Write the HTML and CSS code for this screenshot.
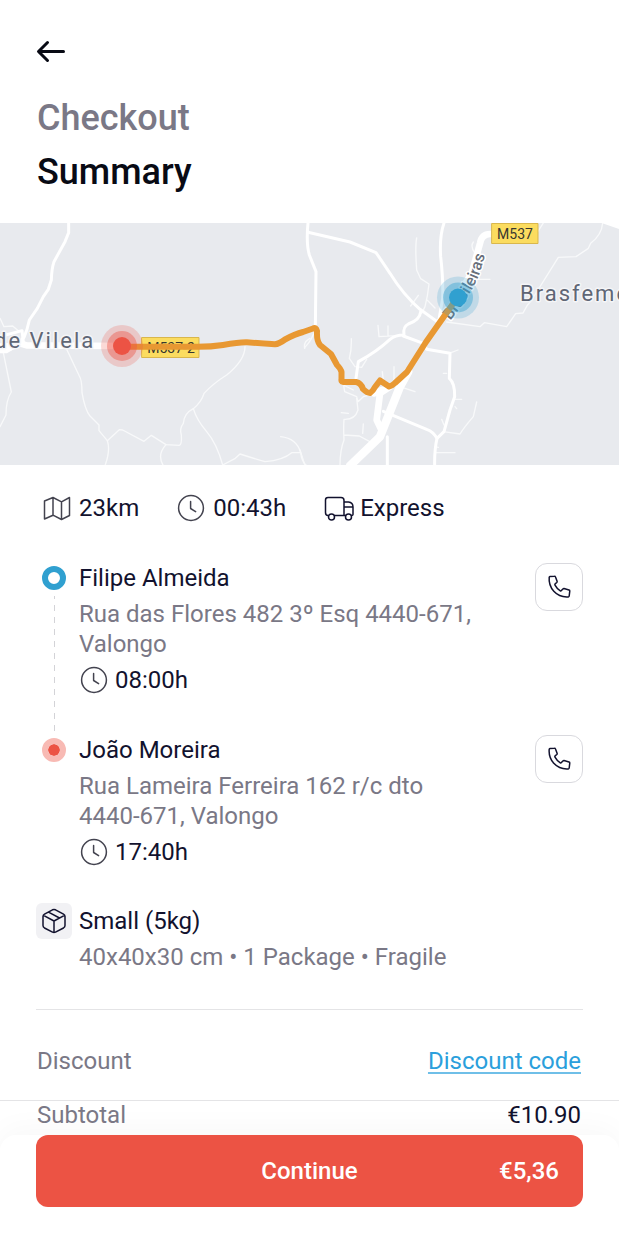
FILE: index.html
```html
<!DOCTYPE html>
<html lang="en">
<head>
<meta charset="utf-8">
<meta name="viewport" content="width=device-width, initial-scale=1">
<title>Checkout Summary</title>
<link rel="stylesheet" href="styles.css">
</head>
<body>
<svg class="sprite" aria-hidden="true">
  <symbol id="clock" viewBox="0 0 28 28">
    <circle cx="14" cy="14" r="12.4"/><path d="M13.6 7.5v7l5 3.2"/>
  </symbol>
  <symbol id="phone" viewBox="0 0 24 24">
    <path d="M2.2 2.3Q2.300 1.600 3 1.500L7.400 1.200Q8.200 1.100 8.400 1.800L10.100 6.300Q10.300 7 9.800 7.500L8.100 8.900Q7.600 9.500 8 10.200 9.800 13.700 13.300 15.800 13.900 16.200 14.400 15.600L15.900 14Q16.400 13.500 17 13.600L22 14.900Q22.800 15.100 22.800 15.900L22.200 21Q22.100 21.800 21.300 21.900 12.500 22.500 6.800 16.300 1.500 10.300 2.200 2.300Z"/>
  </symbol>
</svg>

<header class="header">
  <button class="back" type="button" aria-label="Back">
    <svg width="30" height="24" viewBox="0 0 30 24"><path d="M11.500 3.500 2.500 12.500l9 9M3 12.500h24.500"/></svg>
  </button>
  <h1 class="title"><span class="title-step">Checkout</span><span class="title-page">Summary</span></h1>
</header>

<main>
  <svg class="map" viewBox="0 0 619 242" role="img" aria-label="Route map">
    <g transform="translate(0 -3) scale(.33333)">
      <g class="lane">
        <path d="M200 388 238 468Q246 480 246 518 255 570 270 588L297 615V632L322 662Q332 690 315 737"/>
        <path d="M322 662 358 629 368 630 432 664 454 646 498 674 538 676Q546 674 544 645 538 625 550 610 552 580 580 566 605 545 612 520 640 490 680 465 735 420 735 380"/>
        <path d="M580 566Q590 600 620 635 650 670 668 735L706 715 720 702Q760 715 795 725 850 720 875 698H902Q890 655 842 650M902 698Q905 725 920 737M498 674Q470 705 490 737M10 398 34 516Q18 540 18 585L0 620M0 295 12 320 38 318 55 332M930 355Q910 365 914 385"/>
      </g>
      <path class="road" d="M206 9V38L195 65 162 125Q155 145 154 180L145 208 130 230 112 265 88 300Q82 330 72 352L50 374"/>
      <path class="road wide" d="M0 380 35 378 60 370 80 376 370 378"/>
      <path class="road" d="M0 350 66 332 70 365 20 395H0"/>
      <path class="road" d="M0 388H30L70 370M650 374 740 362 820 368"/>
    </g>
    <g transform="translate(300 -3) scale(.33333)">
      <g class="lane">
        <path d="M350 54Q345 80 350 150L362 176 387 192Q383 230 375 260L365 280M382 241 405 264M355 226 332 258M234 316 237 350 300 346M264 318V348M45 325Q40 355 14 383"/>
        <path d="M440 306 540 320 553 308 620 320 647 281 669 279Q680 255 695 240L775 112 828 110 865 85 872 70Q905 45 908 9M730 9 710 40M520 66Q510 80 525 100M530 178H570"/>
        <path d="M154 356Q155 390 148 415L165 440 185 442 200 418M247 455 252 500M270 490 345 515M282 440V480M124 492 160 510M130 490 134 515 170 530 174 545 190 530 230 520M170 535 174 570Q165 600 132 598 130 625 132 660 120 690 120 737M124 578 145 580M132 645 178 648 215 668M190 612 188 640M440 460H430M465 538H485M465 560 470 566M425 598 432 615M530 546 520 590Q490 625 480 642L430 635M408 698H465M405 680 415 682M0 690 15 737M453 398 474 390"/>
      </g>
      <path class="blank" d="M905 9H960V28Z"/>
      <g class="road">
        <path d="M24 9Q18 70 28 105L48 155 46 325"/>
        <path d="M24 37 150 66 228 98Q240 115 270 160 310 225 360 268L412 305 455 260"/>
        <path d="M432 9Q418 50 422 110 430 180 428 235L415 310"/>
        <path d="M362 275Q360 300 325 312 308 320 312 345 285 345 270 358 230 395 175 425L168 475"/>
        <path d="M310 348 370 370 380 388 450 400 448 475Q465 490 464 530L450 570 432 635 411 655Q400 635 380 628L250 574"/>
        <path d="M411 655Q403 690 404 737M262 650V737"/>
      </g>
      <path class="road highway" d="M325 455 300 500 240 650 150 737"/>
      <path class="road wide" d="M270 500 240 520 230 600 245 632M245 510 222 520"/>
      <path class="road wide" d="M440 280 515 160 540 70Q545 42 570 42H600"/>
    </g>
    <path id="street" d="M450 98Q462 83 468 73 478 57 481 46L489 20"/>
    <text class="street-label"><textPath href="#street">Brasileiras</textPath></text>
    <g class="shield">
      <rect x="492" y="0.5" width="46" height="20"/><text x="515" y="16">M537</text>
      <rect x="142" y="114.5" width="57" height="20"/><text x="171" y="130">M537-2</text>
    </g>
    <text class="place" x="-6" y="125">de Vilela</text>
    <text class="place" x="520" y="78">Brasfemes</text>
    <path class="route" d="M122 123.8H195Q210 124 223 122 240 119 247 119.3L275 121.3Q279 121 285 116.5 295 111 303 109L313 105.5Q316 104 317 108 316.5 118 320 122L331 131 337 142Q341 146 341.5 149V156Q341 159 343 159L356 159Q361 160 363 166 367 170 370 170 373 168 375 164L380 157.5 389 163.5Q392 163 395 160L407 149 426 119 457 75"/>
    <g class="pin-start"><circle cx="122" cy="123" r="21"/><circle cx="122" cy="123" r="15"/><circle cx="122" cy="123" r="9"/></g>
    <g class="pin-end"><circle cx="458" cy="74.500" r="21"/><circle cx="458" cy="74.500" r="15"/><circle cx="458" cy="74.500" r="9"/></g>
  </svg>

  <div class="content">
    <ul class="stats">
      <li><svg class="icon thin" viewBox="0 0 28 28"><path d="M1.500 7 10 3.500l8.500 4.300L26.500 3.500v18L18.500 25.500 10 21.200 1.500 25ZM10 3.500v17.700M18.500 7.800v17.700"/></svg>23km</li>
      <li><svg class="icon thin"><use href="#clock"/></svg>00:43h</li>
      <li><svg class="icon truck" viewBox="0 0 30 28"><path d="M4 21.500Q1.500 21.500 1.500 18.500V6Q1.500 3.500 4 3.500H17Q20 3.500 20 6.500V21.500M10.500 21.500H21.500M20 8H24.500Q29 8.500 29 13V20.500Q29 21.500 27.500 21.500M20 13H29"/><circle cx="7.500" cy="23" r="3"/><circle cx="24.500" cy="23" r="3"/></svg>Express</li>
    </ul>

    <section class="stop">
      <div class="track"><span class="dot pickup"></span><span class="dashes"></span></div>
      <div class="details">
        <h2 class="name">Filipe Almeida</h2>
        <p class="muted">Rua das Flores 482 3º Esq <span class="postcode">4440-671</span>, Valongo</p>
        <p class="time"><svg class="icon thin"><use href="#clock"/></svg>08:00h</p>
      </div>
      <button class="call" type="button" aria-label="Call Filipe Almeida"><svg width="24" height="24"><use href="#phone"/></svg></button>
    </section>

    <section class="stop last">
      <div class="track"><span class="dot dropoff"></span></div>
      <div class="details">
        <h2 class="name">João Moreira</h2>
        <p class="muted">Rua Lameira Ferreira 162 r/c dto <span class="postcode">4440-671</span>, Valongo</p>
        <p class="time"><svg class="icon thin"><use href="#clock"/></svg>17:40h</p>
      </div>
      <button class="call" type="button" aria-label="Call João Moreira"><svg width="24" height="24"><use href="#phone"/></svg></button>
    </section>

    <section class="package">
      <span class="package-icon"><svg width="26" height="26" viewBox="0 0 26 26"><path d="M11.500 1.800Q13 1.100 14.500 1.800L22.500 6.200Q24 7 24 8.500V17.500Q24 19 22.500 20L14.500 24.200Q13 25 11.500 24.200L3.500 20Q2 19 2 17.500V8.500Q2 7 3.500 6.200ZM2.500 7.400 13 13 23.500 7.400M13 13V24.600M7.500 4.200 18.500 10"/></svg></span>
      <div>
        <h2 class="name">Small (5kg)</h2>
        <p class="muted">40x40x30 cm • 1 Package • Fragile</p>
      </div>
    </section>

    <div class="row discount"><span class="muted">Discount</span><a class="link" href="#discount">Discount code</a></div>
  </div>

  <div class="bottom">
    <div class="row subtotal"><span class="muted">Subtotal</span><span>€10.90</span></div>
    <div class="footer">
      <button class="continue" type="button"><span class="continue-label">Continue</span><span class="continue-price">€5,36</span></button>
    </div>
  </div>
</main>
</body>
</html>
```

FILE: styles.css
```css
* { box-sizing: border-box; }
body {
  margin: 0;
  background: #fff;
  color: #12122e;
  font: 24px/30px Roboto, "Liberation Sans", sans-serif;
}
h1, h2, p, ul { margin: 0; padding: 0; font-weight: 400; font-size: inherit; }
svg { display: block; fill: none; stroke-linecap: round; stroke-linejoin: round; }
button { font: inherit; cursor: pointer; }
.sprite { position: absolute; width: 0; height: 0; }

.header { padding: 33px 36px 24px; }
.back { display: flex; align-items: center; height: 36px; margin-bottom: 22px; padding: 0; border: 0; background: none; }
.back svg { stroke: #080a14; stroke-width: 3; }
.title { display: flex; flex-direction: column; padding-left: 1px; font-size: 36px; line-height: 54px; font-weight: 500; }
.title-step { color: #7a7886; }
.title-page { color: #080a14; }

.map { width: 100%; height: auto; background: #e8eaee; }
.lane { stroke: #f8f9fa; stroke-width: 4; }
.blank { fill: #fff; }
.road { stroke: #fff; stroke-width: 9; }
.wide { stroke-width: 20; }
.highway { stroke-width: 25; }
.map text { font-family: Roboto, sans-serif; }
.place { font-size: 22px; letter-spacing: 2px; fill: #5f6675; stroke: #f4f5f7; stroke-width: 3px; paint-order: stroke; }
.street-label { font-size: 16px; font-weight: 500; fill: #69707b; stroke: #fff; stroke-width: 3px; paint-order: stroke; }
.shield rect { fill: #fbdc5f; stroke: #d9b74c; stroke-width: 1px; }
.shield text { font-size: 14px; fill: #37372f; text-anchor: middle; }
.route { stroke: #e89832; stroke-width: 6px; }
.pin-start { fill: #ec5344; }
.pin-end { fill: #30a0d0; }
.pin-start circle:nth-child(1), .pin-end circle:nth-child(1) { opacity: .22; }
.pin-start circle:nth-child(2), .pin-end circle:nth-child(2) { opacity: .42; }

.content { padding: 28px 36px 24px; }
.icon { width: 28px; height: 28px; flex: none; stroke: #12122e; stroke-width: 2; }
.thin { stroke: #43434f; stroke-width: 1.500; }
.truck { width: 30px; stroke-width: 1.500; }
.stats { display: flex; gap: 38px; margin-bottom: 40px; padding-left: 7px; list-style: none; }
.stats li { display: flex; align-items: center; gap: 8px; }
.stats li:last-child { gap: 6px; }

.stop { display: grid; grid-template-columns: 36px 1fr 48px; column-gap: 7px; }
.details { padding-bottom: 40px; }
.last .details { padding-bottom: 36px; }
.track { display: flex; flex-direction: column; align-items: center; padding-top: 3px; }
.dot { width: 24px; height: 24px; border-radius: 50%; }
.pickup { border: 6px solid #30a0d0; }
.dropoff { border: 6px solid #f8bab4; background: #ec5344; background-clip: padding-box; }
.dashes { flex: 1; width: 1px; margin: 6px 0 4px; background: repeating-linear-gradient(#d3d3d7 0 3px, transparent 3px 9px, #d3d3d7 9px 12px); }
.muted { color: #7a7886; }
.stop .muted { margin: 6px 0; padding-right: 30px; }
.postcode { white-space: nowrap; }
.time { display: flex; align-items: center; gap: 7px; padding-left: 1px; }
.call { display: grid; place-items: center; width: 48px; height: 48px; padding: 0; border: 1px solid #d9d9de; border-radius: 12px; background: #fff; }
.call svg { stroke: #12122e; stroke-width: 1.500; }

.package { display: flex; gap: 7px; padding-bottom: 34px; border-bottom: 1px solid #e4e4e6; line-height: 36px; }
.package-icon { display: grid; place-items: center; width: 36px; height: 36px; border-radius: 6px; background: #f1f1f4; }
.package-icon svg { stroke: #12122e; stroke-width: 1.500; }

.row { display: flex; justify-content: space-between; }
.discount { padding: 36px 2px 0 1px; }
.link { color: #2b9fdc; text-decoration-thickness: 2px; text-underline-offset: 3px; text-decoration-color: #6fbfe8; text-decoration-skip-ink: none; }
.bottom { overflow: hidden; border-top: 1px solid #e4e4e6; }
.subtotal { padding: 0 38px 5px 37px; line-height: 29px; }
.footer { padding: 0 36px 36px; border-radius: 16px 16px 0 0; box-shadow: 0 -6px 30px rgba(0, 0, 0, .03); background: #fff; }
.continue { display: grid; grid-template-columns: 1fr auto 1fr; align-items: center; width: 100%; height: 72px; padding: 0 24px; border: 0; border-radius: 12px; background: #ec5344; color: #fff; font-weight: 500; }
.continue-label { grid-column: 2; }
.continue-price { text-align: right; }
```
